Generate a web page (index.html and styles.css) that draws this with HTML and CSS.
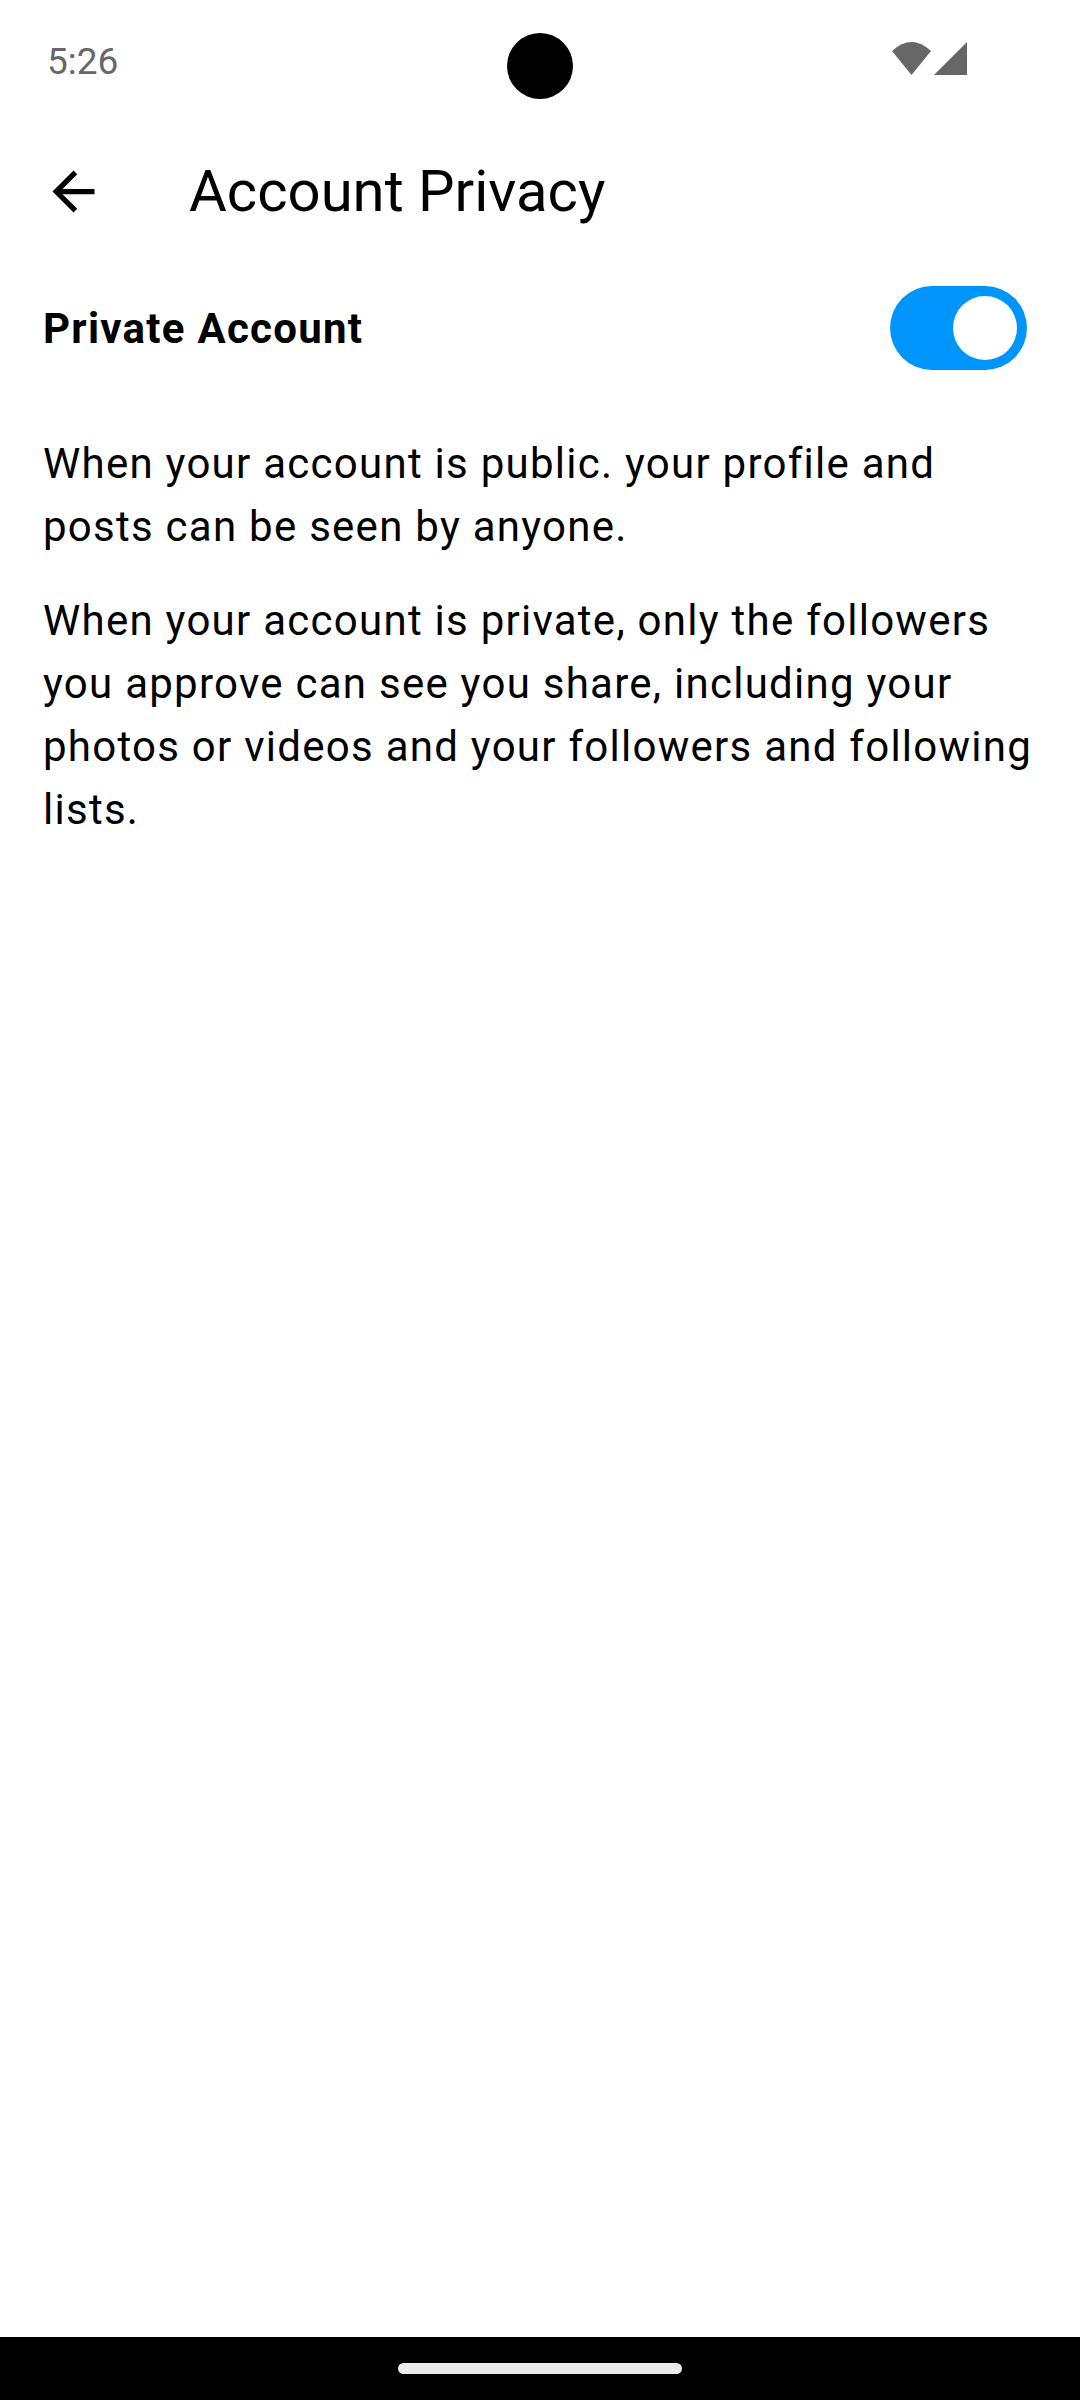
FILE: index.html
```html
<!DOCTYPE html>
<html lang="en">
<head>
<meta charset="utf-8">
<meta name="viewport" content="width=device-width, initial-scale=1">
<title>Account Privacy</title>
<link rel="stylesheet" href="styles.css">
</head>
<body>
<div class="screen">
  <div class="status-bar">
    <time class="clock">5:26</time>
    <svg class="signals" viewBox="0 0 75 39" aria-hidden="true">
      <path d="M0 9Q19.500 -9 39 9L19.500 33Z"/>
      <path d="M42 33L75 0V33Z"/>
    </svg>
    <span class="camera"></span>
  </div>
  <header class="app-bar">
    <button class="back" type="button" aria-label="Back">
      <svg viewBox="0 0 24 24" aria-hidden="true"><path d="M20 11H7.830l5.590-5.590L12 4l-8 8 8 8 1.410-1.410L7.830 13H20v-2z"/></svg>
    </button>
    <h1 class="title">Account Privacy</h1>
  </header>
  <main class="content">
    <div class="setting">
      <label class="setting-label" for="private">Private Account</label>
      <input class="switch" id="private" type="checkbox" role="switch" checked>
    </div>
    <div class="notes">
      <p>When your account is public. your profile and posts can be seen by anyone.</p>
      <p>When your account is private, only the followers you approve can see you share, including your photos or videos and your followers and following lists.</p>
    </div>
  </main>
  <footer class="nav-bar"><span class="handle"></span></footer>
</div>
</body>
</html>
```

FILE: styles.css
```css
* {
  box-sizing: border-box;
}

body {
  margin: 0;
  background: #fff;
  color: #000;
  font-family: Roboto, sans-serif;
  font-size: 42px;
  line-height: 63px;
}

.screen {
  display: flex;
  flex-direction: column;
  min-height: 100vh;
}

.status-bar {
  position: relative;
  display: flex;
  align-items: center;
  justify-content: space-between;
  height: 122px;
  padding: 0 113px 0 47px;
  color: #676767;
}

.clock {
  font-size: 37px;
}

.signals {
  width: 75px;
  height: 39px;
  fill: currentColor;
}

/* camera cutout, over the middle of the status bar */
.camera {
  position: absolute;
  top: 33px;
  left: calc(50% - 33px);
  width: 66px;
  height: 66px;
  border-radius: 50%;
  background: #000;
}

.app-bar {
  display: flex;
  align-items: center;
  gap: 84px;
  height: 138px;
  padding: 0 42px;
}

.back {
  width: 63px;
  height: 63px;
  padding: 0;
  border: 0;
  background: none;
}

.back svg {
  display: block;
  width: 100%;
  height: 100%;
}

.title {
  margin: 0;
  font-size: 58px;
  font-weight: 400;
}

.content {
  flex: 1;
  display: flex;
  flex-direction: column;
  gap: 62px;
  padding: 26px 42px 26px 43px;
  letter-spacing: 0.03em;
}

.setting {
  display: flex;
  align-items: center;
  justify-content: space-between;
  padding-right: 11px;
}

.setting-label {
  font-weight: 700;
}

.switch {
  appearance: none;
  display: flex;
  align-items: center;
  justify-content: flex-start;
  width: 137px;
  height: 84px;
  margin: 0;
  padding: 10px;
  border-radius: 42px;
  background: #ccc;
}

.switch::before {
  content: "";
  width: 64px;
  height: 64px;
  border-radius: 50%;
  background: #fff;
}

.switch:checked {
  justify-content: flex-end;
  background: #0095fa;
}

.notes {
  display: flex;
  flex-direction: column;
  gap: 31px;
}

.notes p {
  margin: 0;
}

.nav-bar {
  display: flex;
  align-items: center;
  justify-content: center;
  height: 63px;
  background: #000;
}

.handle {
  width: 284px;
  height: 11px;
  border-radius: 6px;
  background: #ebebeb;
}
```
